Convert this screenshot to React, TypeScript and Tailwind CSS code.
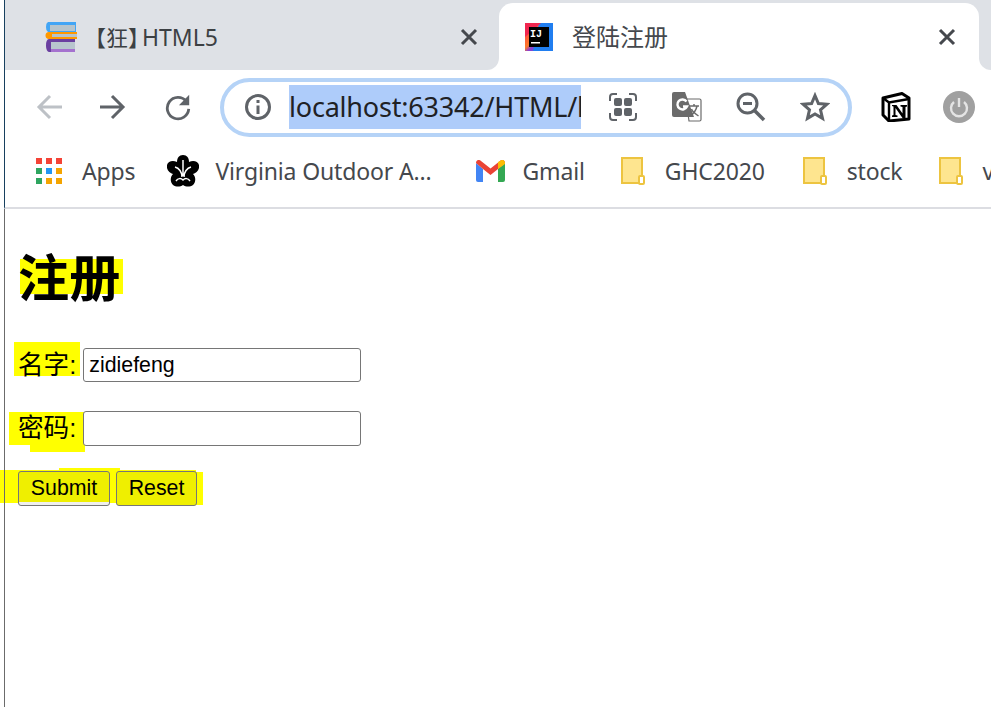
const uiFont = { fontFamily: '"Noto Sans", "Noto Sans CJK SC", sans-serif' };

function CloseIcon() {
  return (
    <svg width="20" height="20" viewBox="0 0 20 20" className="shrink-0">
      <path d="M3 3l14 14M17 3L3 17" stroke="#45484d" strokeWidth="3" fill="none" />
    </svg>
  );
}

function BooksIcon() {
  return (
    <svg width="32" height="32" viewBox="0 0 32 32" className="shrink-0">
      <path d="M3 1h28v10H3a3 5 0 0 1-2-5 3 5 0 0 1 2-5z" fill="#42a5f5" />
      <path d="M5 4h25v6H5z" fill="#b6c4cc" />
      <path d="M4 11h28v7H4a3 3 0 0 1 0-7z" fill="#ff9800" />
      <path d="M7 13h25v3H7z" fill="#b6c4cc" />
      <path d="M4 18h26v13H4a3 6 0 0 1-3-6 3 6 0 0 1 3-7z" fill="#6a3fa0" />
      <path d="M6 21h24v7H6z" fill="#b8c6ce" />
      <path d="M6 28h24v3H6z" fill="#a572cf" />
    </svg>
  );
}

function IdeaIcon() {
  return (
    <svg width="28" height="28" viewBox="0 0 28 28" className="shrink-0">
      <defs>
        <linearGradient id="ij" x1="0" y1="0" x2="1" y2="1">
          <stop offset="0" stopColor="#fe2857" />
          <stop offset="0.45" stopColor="#fd7a28" />
          <stop offset="0.55" stopColor="#8d3fd0" />
          <stop offset="1" stopColor="#087cfa" />
        </linearGradient>
      </defs>
      <rect width="28" height="28" fill="url(#ij)" />
      <path d="M14 0h14v28H8z" fill="#207ef0" />
      <path d="M0 0h16L0 14z" fill="#f0264f" />
      <rect x="4" y="4" width="20" height="20" fill="#000" />
      <text x="5" y="14" fontSize="10" fontWeight="700" fill="#fff" fontFamily="Liberation Mono, monospace">IJ</text>
      <rect x="6" y="19" width="9" height="1.5" fill="#fff" />
    </svg>
  );
}

function NotionIcon() {
  return (
    <svg width="30" height="30" viewBox="0 0 30 30" className="shrink-0">
      <path d="M2 6l19-4.500 7 4.500v21L8 29l-6-6z" fill="#fff" stroke="#000" strokeWidth="3" strokeLinejoin="round" />
      <path d="M2 6l6 4.500L28 7M8 10.500V28" stroke="#000" strokeWidth="2.400" fill="none" />
      <path d="M11 13h4.500l6 8.500V15l-2-.5V13H26v1.500l-1.500.5v11h-3l-7-10v7l2 .5V25H11v-1.500l1.500-.5v-8.500L11 14z" fill="#000" />
    </svg>
  );
}

function TranslateIcon() {
  return (
    <svg width="30" height="30" viewBox="0 0 30 30" className="shrink-0 ml-[34px]">
      <path d="M14 7h13.500a1.500 1.500 0 0 1 1.500 1.500v19a1.500 1.500 0 0 1-1.500 1.500H17z" fill="#fff" stroke="#6b6b6b" strokeWidth="1.200" />
      <path d="M2 0h11l9 25H2a2 2 0 0 1-2-2V2a2 2 0 0 1 2-2z" fill="#6b6b6b" />
      <path d="M14.500 9.500a5 5 0 1 0 .5 5h-4" stroke="#fff" strokeWidth="2.400" fill="none" />
      <path d="M17 14h10M22 12v2M25 14c-1 5-4 8-7 10M19.500 17c1 3 4 5 7 7" stroke="#6b6b6b" strokeWidth="1.500" fill="none" />
    </svg>
  );
}

function AppsIcon() {
  const colors = ['#f44336', '#f44336', '#f44336', '#2ea55f', '#2196f3', '#f4a400', '#2ea55f', '#f4a400', '#f4a400'];
  return (
    <div className="grid grid-cols-3 gap-1 w-[26px] shrink-0">
      {colors.map((c, i) => (
        <svg key={i} width="6" height="6" viewBox="0 0 6 6">
          <rect width="6" height="6" fill={c} />
        </svg>
      ))}
    </div>
  );
}

function FileIcon() {
  return (
    <svg width="24" height="28" viewBox="0 0 24 28" className="shrink-0">
      <path d="M1 1h20v25H1z" fill="#fee58f" stroke="#edc440" strokeWidth="2" />
      <rect x="18" y="19" width="5" height="8" rx="1" fill="#fff" stroke="#edc440" strokeWidth="2" />
    </svg>
  );
}

function Bookmark({ icon, label, className }: { icon: React.ReactNode; label: string; className: string }) {
  return (
    <div className={`flex items-center shrink-0 ${className}`}>
      {icon}
      <span className="whitespace-nowrap text-[23px] tracking-[-0.15px] leading-[32px] text-[#45484d]">{label}</span>
    </div>
  );
}

function TabBar() {
  return (
    <div className="h-[70px] flex bg-[#dee1e6] border-l border-[#17405f]">
      <div className="w-[494px] flex items-center pt-[3px] pl-[40px] pr-[20px] shrink-0">
        <BooksIcon />
        <span className="ml-[7px] text-[22px] leading-[32px] text-[#3c4043] flex-1 whitespace-nowrap">
          【狂<span className="inline-block w-[14px]">】</span>
          <span className="text-[23px]">HTML5</span>
        </span>
        <CloseIcon />
      </div>
      <div className="relative mt-[3px] w-[480px] h-[67px] bg-white rounded-t-[14px] flex items-center pl-[26px] pr-[22px] shrink-0">
        <div className="absolute -left-[12px] bottom-0 w-[12px] h-[12px] bg-white">
          <div className="w-full h-full bg-[#dee1e6] rounded-br-[12px]" />
        </div>
        <div className="absolute -right-[12px] bottom-0 w-[12px] h-[12px] bg-white">
          <div className="w-full h-full bg-[#dee1e6] rounded-bl-[12px]" />
        </div>
        <IdeaIcon />
        <span className="ml-[19px] text-[24px] leading-[32px] text-[#45484d] flex-1">登陆注册</span>
        <CloseIcon />
      </div>
    </div>
  );
}

function Toolbar() {
  return (
    <div className="h-[70px] flex items-center bg-white border-l border-[#17405f] pl-[31px] pt-[4px]">
      <svg width="26" height="26" viewBox="0 0 26 26" className="shrink-0">
        <path d="M26 13H3M14 2L3 13l11 11" stroke="#bdc1c6" strokeWidth="3" fill="none" />
      </svg>
      <svg width="26" height="26" viewBox="0 0 26 26" className="shrink-0 ml-[38px]">
        <path d="M0 13h23M12 2l11 11-11 11" stroke="#5f6368" strokeWidth="3" fill="none" />
      </svg>
      <svg width="28" height="28" viewBox="0 0 30 30" className="shrink-0 ml-[38px]">
        <path d="M24 9a11.500 11.500 0 1 0 2.500 8" stroke="#5f6368" strokeWidth="3" fill="none" />
        <path d="M27 2v11H16z" fill="#5f6368" />
      </svg>
      <div className="ml-[28px] w-[632px] h-[59px] border-[4px] border-[#b5d3f7] rounded-full flex items-center pl-[20px] shrink-0">
        <svg width="28" height="28" viewBox="0 0 28 28" className="shrink-0">
          <circle cx="14" cy="14" r="11.500" stroke="#5f6368" strokeWidth="3" fill="none" />
          <path d="M12.500 12.500h3V21h-3zM12.500 7h3v3h-3z" fill="#5f6368" />
        </svg>
        <div className="ml-[17px] w-[292px] h-[44px] bg-[#aeccfa] overflow-hidden shrink-0">
          <span className="block whitespace-nowrap text-[27px] tracking-[-0.2px] leading-[44px] text-[#202124]">localhost:63342/HTML/html/</span>
        </div>
        <svg width="30" height="30" viewBox="0 0 30 30" className="shrink-0 ml-[27px]">
          <path d="M2 9V5a3 3 0 0 1 3-3h4M21 2h4a3 3 0 0 1 3 3v4M28 21v4a3 3 0 0 1-3 3h-4M9 28H5a3 3 0 0 1-3-3v-4" stroke="#5f6368" strokeWidth="2" fill="none" />
          <rect x="6" y="6" width="8" height="8" rx="2" fill="#5f6368" />
          <rect x="16" y="6" width="8" height="8" rx="2" fill="#5f6368" />
          <rect x="6" y="16" width="8" height="8" rx="2" fill="#5f6368" />
          <rect x="16" y="16" width="8" height="8" rx="2" fill="#5f6368" />
        </svg>
        <TranslateIcon />
        <svg width="30" height="30" viewBox="0 0 30 30" className="shrink-0 ml-[34px]">
          <circle cx="11.500" cy="11.500" r="9.500" stroke="#5f6368" strokeWidth="3" fill="none" />
          <path d="M7 11.500h9" stroke="#5f6368" strokeWidth="3" />
          <path d="M18.500 18.500L28 28" stroke="#5f6368" strokeWidth="3.500" />
        </svg>
        <svg width="30" height="30" viewBox="0 0 30 30" className="shrink-0 ml-[34px]">
          <path d="M15 3.500l3.400 8 8.600.7-6.500 5.700 2 8.500L15 21.900 7.500 26.400l2-8.500L3 12.200l8.600-.7z" stroke="#5f6368" strokeWidth="3" fill="none" />
        </svg>
      </div>
      <div className="ml-[29px]">
        <NotionIcon />
      </div>
      <svg width="32" height="32" viewBox="0 0 32 32" className="shrink-0 ml-[32px]">
        <circle cx="16" cy="16" r="16" fill="#a0a0a0" />
        <path d="M11 11a8 8 0 1 0 10 0" stroke="#e4e4e4" strokeWidth="2.400" fill="none" />
        <path d="M16 7v9" stroke="#e4e4e4" strokeWidth="2.400" />
      </svg>
    </div>
  );
}

function BookmarkBar() {
  return (
    <div className="h-[69px] flex items-start pt-[15px] bg-white border-l border-[#17405f] border-b-2 border-b-[#dcdde2] pl-[31px] overflow-hidden">
      <Bookmark icon={<AppsIcon />} label="Apps" className="gap-[20px]" />
      <Bookmark
        className="ml-[32px] gap-[16px]"
        label="Virginia Outdoor A..."
        icon={
          <svg width="32" height="32" viewBox="0 0 32 32" className="shrink-0">
            <path d="M16 0c4 0 6 3 6 7 4-2 9-1 10 3 1 5-3 8-6 9 3 3 3 8 0 11-3 2-7 2-10 0-3 2-7 2-10 0-3-3-3-8 0-11-3-1-7-4-6-9 1-4 6-5 10-3 0-4 2-7 6-7z" fill="#000" />
            <path d="M16 5v16M8 12c4 1 7 5 7 10M24 12c-4 1-7 5-7 10M9 26c2-3 5-3 7-1 2-2 5-2 7 1" stroke="#fff" strokeWidth="1.500" fill="none" />
          </svg>
        }
      />
      <Bookmark
        className="ml-[44px] gap-[18px]"
        label="Gmail"
        icon={
          <svg width="29" height="22" viewBox="0 0 29 22" className="shrink-0">
            <path d="M0 3v17a2 2 0 0 0 2 2h5V9z" fill="#4285f4" />
            <path d="M29 3v17a2 2 0 0 1-2 2h-5V9z" fill="#34a853" />
            <path d="M0 3c0-3 3-4 5-2l9.500 7.500L24 1c2-2 5-1 5 2l-7 6-7.500 6L7 9z" fill="#ea4335" />
            <path d="M22 2l2-1c2-2 5-1 5 2v1l-7 5z" fill="#fbbc04" />
          </svg>
        }
      />
      <Bookmark className="ml-[36px] gap-[20px]" label="GHC2020" icon={<FileIcon />} />
      <Bookmark className="ml-[38px] gap-[20px]" label="stock" icon={<FileIcon />} />
      <Bookmark className="ml-[36px] gap-[20px]" label="v" icon={<FileIcon />} />
    </div>
  );
}

function RegisterForm() {
  return (
    <div className="relative flex-1 bg-white border-l border-[#6b6b6b] pl-[13px] pt-[40px] text-black" style={{ fontFamily: '"Liberation Sans", "Noto Sans CJK SC", sans-serif' }}>
      <div className="relative w-fit">
        <span className="absolute left-[2px] top-[10px] w-[103px] h-[35px] bg-[#ffff00]" />
        <h1 className="relative text-[51.2px] leading-[62px] font-bold">注册</h1>
      </div>
      <div className="mt-[37px] h-[34px] flex items-center">
        <div className="relative">
          <span className="absolute -left-[4px] -top-[9px] w-[66px] h-[34px] bg-[#ffff00]" />
          <label className="relative block text-[25.6px] leading-[28px]">名字:</label>
        </div>
        <input readOnly value="zidiefeng" className="ml-[7px] w-[278px] h-[34px] border border-[#767676] rounded-[3px] px-[5px] text-[21.33px] outline-none" />
      </div>
      <div className="mt-[29px] h-[35px] flex items-center">
        <div className="relative mb-[2px]">
          <span className="absolute -left-[9px] -top-[2px] w-[75px] h-[33px] bg-[#ffff00]" />
          <span className="absolute left-[12px] top-[31px] w-[55px] h-[7px] bg-[#ffff00]" />
          <label className="relative block text-[25.6px] leading-[28px]">密码:</label>
        </div>
        <input readOnly className="relative ml-[7px] w-[278px] h-[35px] bg-white border border-[#767676] rounded-[3px] px-[5px] text-[21.33px] outline-none" />
      </div>
      <div className="relative mt-[25px] h-[35px] flex gap-[6px]">
        <span className="absolute -left-[18px] -top-[1px] w-[196px] h-[33px] bg-[#ffff00]" />
        <span className="absolute -left-[14px] -top-[1px] w-px h-[33px] bg-[#6b6b6b]" />
        <span className="absolute left-[41px] -top-[3px] w-[61px] h-[3px] bg-[#ffff00]" />
        <span className="absolute left-[178px] top-[1px] w-[7px] h-[33px] bg-[#ffff00]" />
        <button className="relative w-[92px] h-[35px] border border-[#767676] rounded-[3px] text-[21.33px] text-black bg-[linear-gradient(#efef00_91%,#efefef_91%)]">Submit</button>
        <button className="relative w-[81px] h-[35px] border border-[#767676] rounded-[3px] text-[21.33px] text-black bg-[#efef00]">Reset</button>
      </div>
    </div>
  );
}

export default function App() {
  return (
    <div className="w-[991px] h-[707px] overflow-hidden bg-white pl-[4px] flex flex-col" style={uiFont}>
      <TabBar />
      <Toolbar />
      <BookmarkBar />
      <RegisterForm />
    </div>
  );
}
